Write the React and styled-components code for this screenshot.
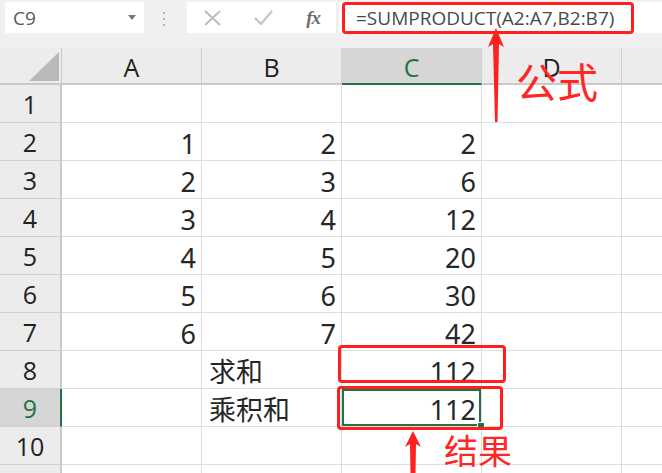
import React from 'react';
import styled, { createGlobalStyle } from 'styled-components';

const GlobalStyle = createGlobalStyle`
  body {
    margin: 0;
    background: #fff;
    font-family: "Noto Sans", "Noto Sans CJK SC", sans-serif;
  }
`;

const Page = styled.div`
  position: relative;
  width: 662px;
  height: 473px;
  overflow: hidden;
  background: #fff;
`;

const TopBar = styled.div`
  display: flex;
  align-items: flex-start;
  height: 48px;
  padding-top: 2px;
  box-sizing: border-box;
  background: #f0f0f0;
`;

const NameBox = styled.div`
  display: flex;
  align-items: center;
  justify-content: space-between;
  width: 139px;
  height: 31px;
  margin-left: 5px;
  padding: 0 8px 0 8px;
  box-sizing: border-box;
  background: #fff;
  color: #5a5a5a;
  font-family: "Open Sans", sans-serif;
  font-size: 19px;
`;

const Dots = styled.div`
  display: flex;
  flex-direction: column;
  gap: 4px;
  width: 2px;
  margin: 10px 0 0 19px;
  span {
    width: 2px;
    height: 2px;
    background: #b3b3b3;
  }
`;

const FxBox = styled.div`
  display: flex;
  align-items: center;
  justify-content: space-between;
  width: 149px;
  height: 31px;
  margin-left: 22px;
  padding: 0 16px 0 17px;
  box-sizing: border-box;
  background: #fff;
`;

const FxLabel = styled.span`
  font-family: "Liberation Serif", serif;
  font-style: italic;
  font-weight: bold;
  font-size: 19px;
  color: #6e6e6e;
  letter-spacing: -1px;
`;

const FormulaInput = styled.div`
  flex: 1;
  display: flex;
  align-items: center;
  height: 31px;
  margin-left: 3px;
  padding-left: 17px;
  background: #fff;
  color: #4a4a4a;
  font-family: "Open Sans", sans-serif;
  font-size: 19px;
  white-space: nowrap;
`;

const Sheet = styled.div`
  display: grid;
  grid-template-columns: 62px repeat(5, 140px);
  grid-template-rows: 37px repeat(11, 38px);
`;

const Corner = styled.div`
  position: relative;
  background: #ececec;
  border-right: 1px solid #c9c9c9;
  border-bottom: 2px solid #c9c9c9;
  svg {
    position: absolute;
    right: 2px;
    bottom: 2px;
  }
`;

const ColHead = styled.div`
  display: flex;
  align-items: center;
  justify-content: center;
  background: ${p => (p.$active ? '#d6d6d6' : '#ececec')};
  color: ${p => (p.$active ? '#217346' : '#222')};
  border-right: 1px solid #d0d0d0;
  border-bottom: 2px solid ${p => (p.$active ? '#217346' : '#c9c9c9')};
  font-family: "Open Sans", sans-serif;
  font-size: 25px;
  padding-top: 2px;
  box-sizing: border-box;
`;

const RowHead = styled.div`
  display: flex;
  align-items: center;
  justify-content: center;
  background: ${p => (p.$active ? '#d6d6d6' : '#ececec')};
  color: ${p => (p.$active ? '#217346' : '#222')};
  border-right: 2px solid ${p => (p.$active ? '#217346' : '#c9c9c9')};
  border-bottom: 1px solid #cfcfcf;
  font-family: "Open Sans", sans-serif;
  font-size: 25px;
  box-sizing: border-box;
`;

const Cell = styled.div`
  position: relative;
  display: flex;
  align-items: center;
  justify-content: ${p => (p.$left ? 'flex-start' : 'flex-end')};
  padding: 3px ${p => (p.$left ? '0' : '5px')} 0 ${p => (p.$left ? '7px' : '0')};
  border-right: 1px solid #dedede;
  border-bottom: 1px solid #dedede;
  box-sizing: border-box;
  color: #262626;
  font-family: "Noto Sans", "Noto Sans CJK SC", sans-serif;
  font-size: 27px;
  line-height: 1;
  ${p => p.$selected && `
    box-shadow: inset 0 0 0 2px #217346;
  `}
`;

const FillHandle = styled.span`
  position: absolute;
  right: -4px;
  bottom: -4px;
  width: 6px;
  height: 6px;
  background: #217346;
  border: 1px solid #fff;
  z-index: 1;
`;

const RedBox = styled.div`
  position: absolute;
  left: ${p => p.$x}px;
  top: ${p => p.$y}px;
  width: ${p => p.$w}px;
  height: ${p => p.$h}px;
  border: 3px solid #ff1f1f;
  border-radius: 4px;
  box-sizing: border-box;
  z-index: 5;
`;

const Note = styled.span`
  position: absolute;
  left: ${p => p.$x}px;
  top: ${p => p.$y}px;
  color: #ff2626;
  font-family: "Noto Sans CJK SC", sans-serif;
  font-size: ${p => p.$size}px;
  line-height: 1;
  z-index: 6;
`;

const Arrows = styled.svg`
  position: absolute;
  left: 0;
  top: 0;
  z-index: 6;
  pointer-events: none;
`;

const cols = ['A', 'B', 'C', 'D', 'E'];

const data = {
  2: ['1', '2', '2'],
  3: ['2', '3', '6'],
  4: ['3', '4', '12'],
  5: ['4', '5', '20'],
  6: ['5', '6', '30'],
  7: ['6', '7', '42'],
  8: ['', '求和', '112'],
  9: ['', '乘积和', '112'],
};

function App() {
  const rows = Array.from({ length: 11 }, (_, i) => i + 1);
  return (
    <Page>
      <GlobalStyle />
      <TopBar>
        <NameBox>
          C9
          <svg width="8" height="5" viewBox="0 0 8 5">
            <path d="M0 0 L8 0 L4 5 Z" fill="#777" />
          </svg>
        </NameBox>
        <Dots>
          <span />
          <span />
          <span />
        </Dots>
        <FxBox>
          <svg width="17" height="16" viewBox="0 0 17 16">
            <path d="M1 1 L16 15 M16 1 L1 15" stroke="#bdbdbd" strokeWidth="2" fill="none" />
          </svg>
          <svg width="19" height="15" viewBox="0 0 19 15">
            <path d="M1 8 L7 14 L18 1" stroke="#c4c4c4" strokeWidth="2.2" fill="none" />
          </svg>
          <FxLabel>fx</FxLabel>
        </FxBox>
        <FormulaInput>=SUMPRODUCT(A2:A7,B2:B7)</FormulaInput>
      </TopBar>

      <Sheet>
        <Corner>
          <svg width="30" height="29" viewBox="0 0 30 29">
            <path d="M0 29 L30 0 L30 29 Z" fill="#b9b9b9" />
          </svg>
        </Corner>
        {cols.map(c => (
          <ColHead key={c} $active={c === 'C'}>{c}</ColHead>
        ))}
        {rows.map(r => (
          <React.Fragment key={r}>
            <RowHead $active={r === 9}>{r}</RowHead>
            {cols.map((c, ci) => {
              const v = data[r] ? data[r][ci] || '' : '';
              const isText = r >= 8 && ci === 1;
              const sel = r === 9 && c === 'C';
              return (
                <Cell key={c} $left={isText} $selected={sel}>
                  {v}
                  {sel && <FillHandle />}
                </Cell>
              );
            })}
          </React.Fragment>
        ))}
      </Sheet>

      <RedBox $x={342} $y={2} $w={292} $h={32} />
      <RedBox $x={338} $y={345} $w={168} $h={38} />
      <RedBox $x={337} $y={386} $w={166} $h={44} />

      <Arrows width="662" height="473" viewBox="0 0 662 473">
        <path d="M496 28 L504 47 L499 44 L497.5 122 L495 122 L493 44 L488 47 Z" fill="#ff2020" />
        <path d="M413 431 L421 447 L416 444 L415.5 473 L410.5 473 L410 444 L405 447 Z" fill="#ff2020" />
      </Arrows>

      <Note $x={516} $y={60} $size={41}>公式</Note>
      <Note $x={444} $y={433} $size={34}>结果</Note>
    </Page>
  );
}

export default App;
